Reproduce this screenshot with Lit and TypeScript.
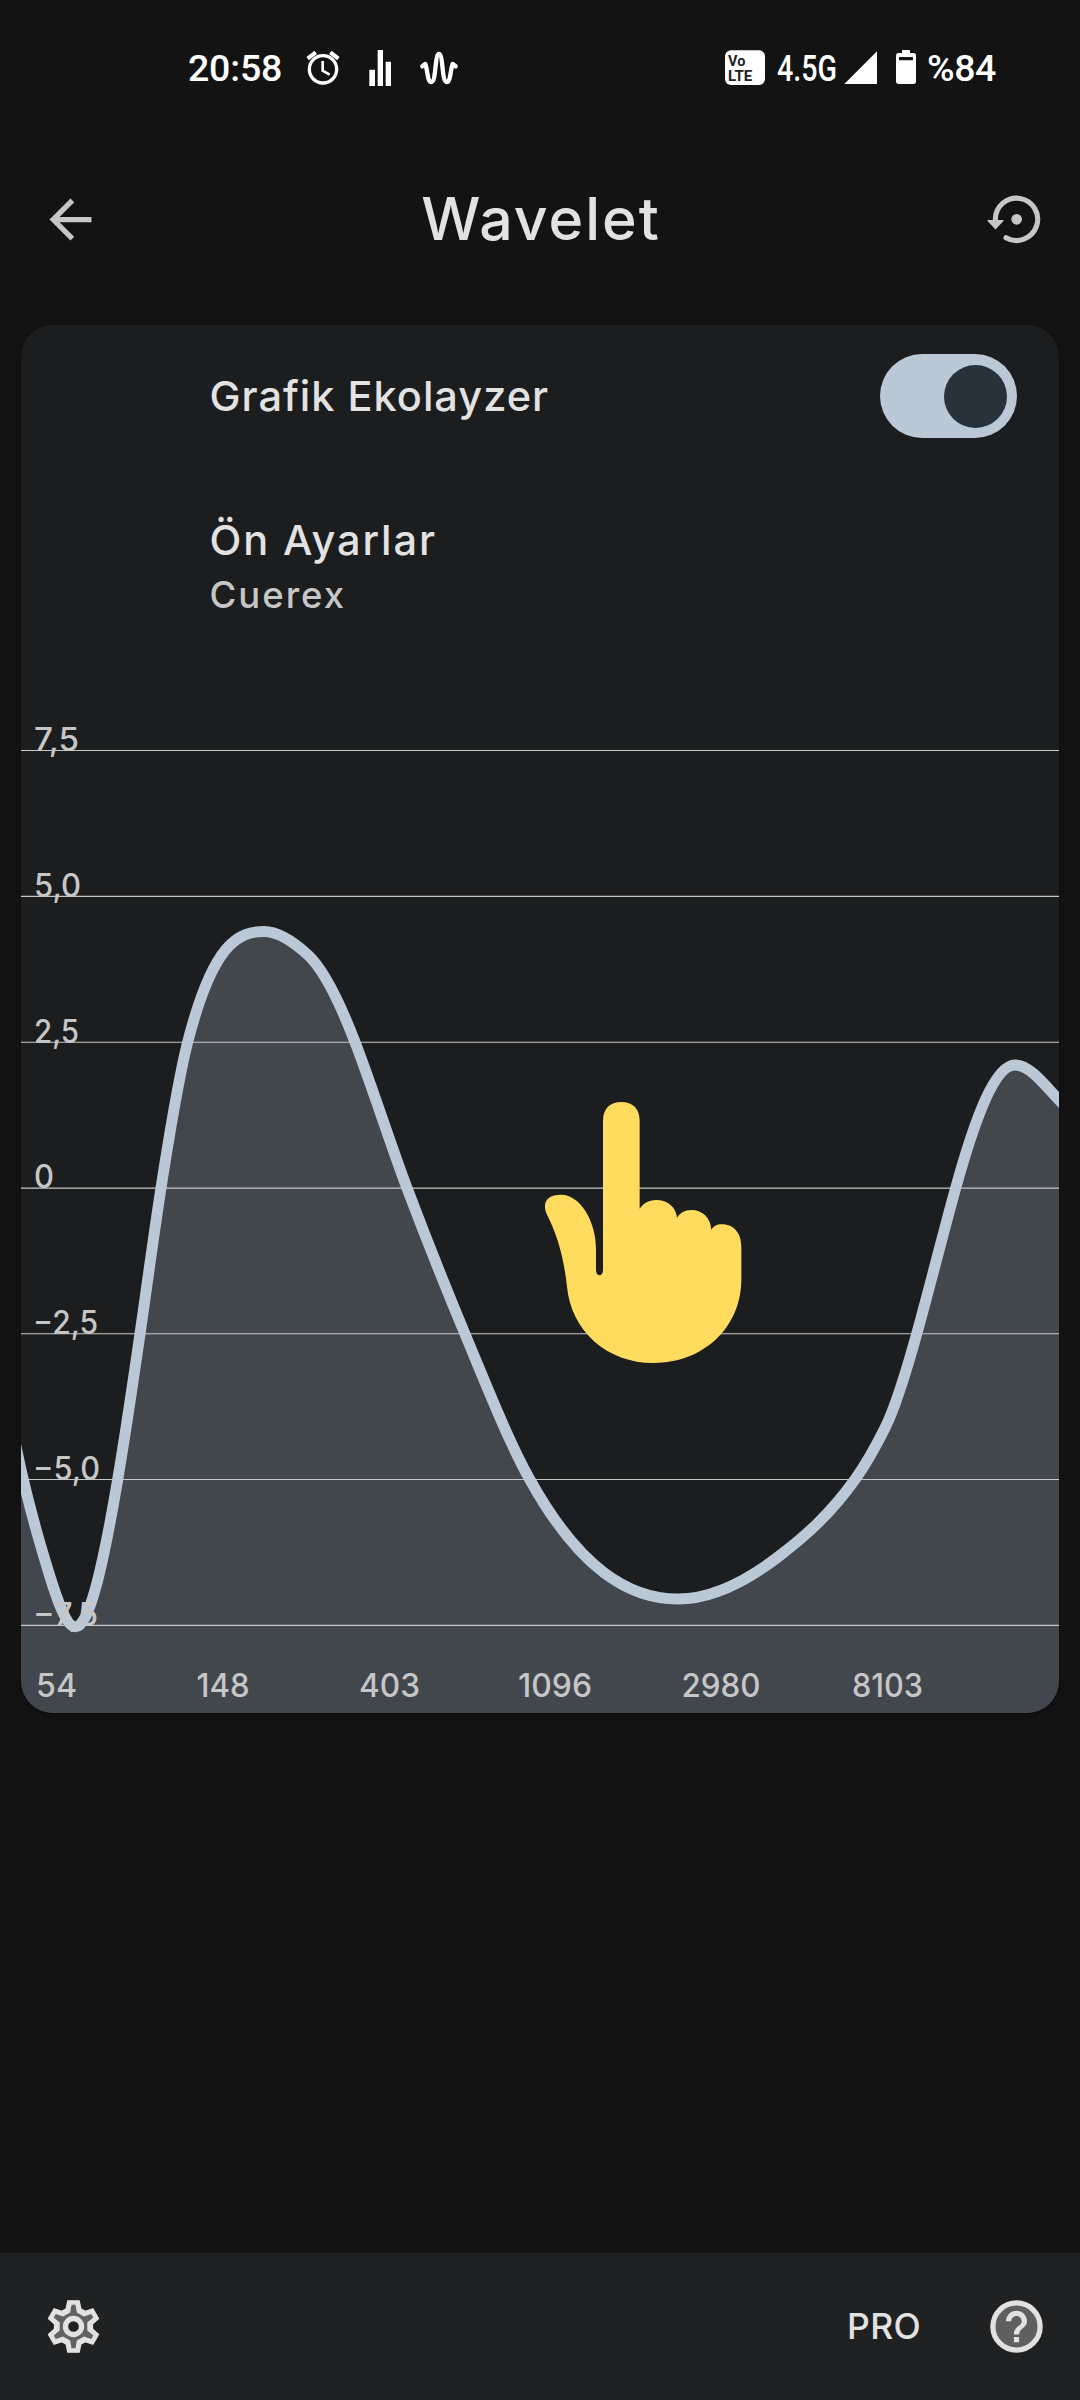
import { LitElement, html, css, svg } from "lit";
import { customElement, property } from "lit/decorators.js";

/** A knot of the response curve: x, y and the slope dy/dx there. */
type Knot = [number, number, number];

const KNOTS: Knot[] = [
  [11, 1424, 4.7],
  [21, 1470, 4.4],
  [41, 1546.7, 3.4],
  [75.6, 1626.8, 0],
  [117.7, 1479.5, -5.9],
  [140, 1334, -6.9],
  [161, 1188, -6.4],
  [187.7, 1042, -3.9],
  [264, 931.5, 0],
  [308, 955, 0.92],
  [355, 1042, 2.6],
  [407, 1188, 2.65],
  [465, 1334, 2.4],
  [529.8, 1479.5, 1.8],
  [678, 1599, 0],
  [778, 1557, -0.76],
  [855, 1479.5, -1.4],
  [885, 1428, -2],
  [916.7, 1334, -3.6],
  [955.7, 1188, -3.6],
  [1015, 1065, 0],
  [1059, 1100, 1.05],
  [1070, 1112, 1.05],
];

/** Joins the knots with cubic Hermite segments. */
function curvePath(k: Knot[]): string {
  let d = `M${k[0][0]} ${k[0][1]}`;
  for (let i = 1; i < k.length; i++) {
    const [x0, y0, m0] = k[i - 1];
    const [x1, y1, m1] = k[i];
    const h = (x1 - x0) / 3;
    d += `C${x0 + h} ${y0 + m0 * h} ${x1 - h} ${y1 - m1 * h} ${x1} ${y1}`;
  }
  return d;
}

const GAINS = [
  { label: "7,5", y: 750.8, x: 34, w: 45 },
  { label: "5,0", y: 896.7, x: 34, w: 47 },
  { label: "2,5", y: 1042.5, x: 34, w: 45 },
  { label: "0", y: 1188.4, x: 34, w: 20 },
  { label: "−2,5", y: 1334, x: 33, w: 65 },
  { label: "−5,0", y: 1479.8, x: 33, w: 67 },
  { label: "−7,5", y: 1625.7, x: 33, w: 65 },
];

const BANDS = [
  { label: "54", x: 56.5, w: 41 },
  { label: "148", x: 223, w: 53 },
  { label: "403", x: 389.5, w: 61 },
  { label: "1096", x: 555, w: 74 },
  { label: "2980", x: 721, w: 79 },
  { label: "8103", x: 887.5, w: 71 },
];

@customElement("eq-chart")
export class EqChart extends LitElement {
  static styles = css`
    :host { display: block; }
    svg { display: block; width: 100%; }
    .area { fill: #42474d; }
    .grid { stroke: #c6c8c8; stroke-width: 1.1; }
    .curve { fill: none; stroke: #bbc8d5; stroke-width: 11; }
    .label {
      fill: #c6c6c7;
      font: 500 32px Inter, "Liberation Sans", sans-serif;
    }
    .mid { text-anchor: middle; }
    .hand { fill: #ffdb5e; }
  `;

  render() {
    const d = curvePath(KNOTS);
    return html`<svg viewBox="21 690 1038 1023" height="1023">
      <path class="area" d="${d}V1713H11Z" />
      ${GAINS.map((g) => svg`<line class="grid" x1="21" x2="1059" y1=${g.y - 0.3} y2=${g.y - 0.3} />`)}
      <path class="curve" d=${d} />
      ${GAINS.map((g) => svg`<text class="label" x=${g.x} y=${g.y} textLength=${g.w} lengthAdjust="spacingAndGlyphs">${g.label}</text>`)}
      ${BANDS.map((b) => svg`<text class="label mid" x=${b.x} y="1696.8" textLength=${b.w} lengthAdjust="spacingAndGlyphs">${b.label}</text>`)}
      <g transform="translate(520 1070) scale(.33333)">
        <path class="hand" d="M249 152C249 116 270 96 304 96S359 116 359 152V416C369 402 386 390 408 390C444 390 468 412 471 443C480 429 494 420 514 420C549 420 572 444 574 480C580 469 590 463 606 463C642 463 664 490 664 530V628C664 775 548 879 401 879C262 879 154 784 141 650C131 560 112 495 80 432C66 397 81 374 124 374C181 374 228 455 228 535V600C228 621 249 621 249 600Z" />
      </g>
    </svg>`;
  }
}

@customElement("toggle-switch")
export class ToggleSwitch extends LitElement {
  @property({ type: Boolean }) on = false;

  static styles = css`
    :host { display: block; }
    .track {
      box-sizing: border-box;
      display: flex;
      align-items: center;
      width: 137px;
      height: 84px;
      padding: 0 10.5px;
      border-radius: 42px;
      background: #bbc8d5;
    }
    .thumb {
      width: 63px;
      height: 63px;
      border-radius: 50%;
      background: #28323a;
      margin-left: auto;
    }
  `;

  render() {
    return html`<div class="track"><div class="thumb"></div></div>`;
  }
}

@customElement("status-bar")
export class StatusBar extends LitElement {
  static styles = css`
    :host {
      box-sizing: border-box;
      display: flex;
      align-items: center;
      height: 134px;
      padding: 1px 84px 0 188px;
      color: #fff;
      font: 500 37.5px/44px Roboto, sans-serif;
    }
    .icons { display: block; overflow: visible; }
    .left { margin-left: 23.5px; }
    .right { margin-left: auto; }
    .time { letter-spacing: -0.2px; }
    .battery { margin-left: 9px; letter-spacing: -0.4px; }
    .ink { fill: none; stroke: #fff; }
    .cell { font: 500 108px Roboto, sans-serif; fill: #fff; }
    .volte { font: 700 46px Roboto, sans-serif; fill: #222; }
  `;

  render() {
    return html`
      <span class="time">20:58</span>
      <svg class="icons left" width="153" height="40" viewBox="435 54 459 120">
        <circle class="ink" cx="486" cy="118" r="41" stroke-width="10" />
        <path class="ink" stroke-width="8" d="M485 93V122L506 134" />
        <path class="ink" stroke-width="12" d="M440 86L464 67M508 67L532 86" />
        <path fill="#fff" d="M625 119H642V168H625ZM650 60H666V168H650ZM674 95H690V168H674Z" />
        <path class="ink" stroke-width="13" stroke-linecap="round" stroke-linejoin="round"
          d="M784 109L793 102C800 120 799 156 811 156C826 156 821 72 834 72S842 156 857 156C869 156 868 120 875 102L884 109" />
      </svg>
      <svg class="icons right" width="194" height="40" viewBox="72 54 582 120">
        <rect x="75" y="61" width="120" height="104" rx="18" fill="#fff" />
        <text class="volte" x="84" y="107" textLength="52" lengthAdjust="spacingAndGlyphs">Vo</text>
        <text class="volte" x="84" y="153" textLength="73" lengthAdjust="spacingAndGlyphs">LTE</text>
        <text class="cell" x="231" y="153" textLength="180" lengthAdjust="spacingAndGlyphs">4.5G</text>
        <path fill="#fff" d="M531 64V162H433Z" />
        <path fill="#fff" fill-rule="evenodd"
          d="M606 60H630V69H640Q648 69 648 77V154Q648 162 640 162H596Q588 162 588 154V77Q588 69 596 69H606ZM597 81V91H639V81Z" />
      </svg>
      <span class="battery">%84</span>
    `;
  }
}

const TOOTH_ANGLES = [0, 60, 120, 180, 240, 300];

/** Outline of a six-toothed gear centred on the origin. */
function gear(tip: number, tipY: number, base: number, baseY: number): string {
  const tooth = [[-base, -baseY], [-tip, -tipY], [tip, -tipY], [base, -baseY]];
  return TOOTH_ANGLES.flatMap((deg) => {
    const a = (deg * Math.PI) / 180;
    return tooth.map(([x, y]) =>
      `${(x * Math.cos(a) - y * Math.sin(a)).toFixed(2)},${(x * Math.sin(a) + y * Math.cos(a)).toFixed(2)}`);
  }).join(" ");
}

@customElement("app-root")
export class AppRoot extends LitElement {
  static styles = css`
    :host {
      display: flex;
      flex-direction: column;
      box-sizing: border-box;
      width: 1080px;
      height: 2400px;
      background: #131313;
      color: #e3e2e2;
      font-family: Inter, "Liberation Sans", sans-serif;
      font-weight: 500;
      overflow: hidden;
    }
    svg { display: block; }
    .bar {
      display: grid;
      grid-template-columns: 63px 1fr 63px;
      align-items: center;
      height: 170px;
      padding: 0 33px 0 39px;
    }
    .title {
      margin: 0;
      text-align: center;
      font-size: 59px;
      font-weight: 500;
      line-height: 70px;
      letter-spacing: 2px;
      padding-right: 4px;
    }
    .card {
      display: flex;
      flex-direction: column;
      height: 1388px;
      margin: 21px 21px 0;
      border-radius: 32px;
      background: #1c1d1e;
      overflow: hidden;
      box-shadow: 0 2px 4px rgba(0, 0, 0, 0.35);
    }
    .row {
      box-sizing: border-box;
      display: flex;
      align-items: center;
      justify-content: space-between;
      height: 142px;
      padding: 0 42px 0 188.5px;
    }
    .name { font-size: 41.5px; line-height: 56px; }
    .equalizer { letter-spacing: 1px; }
    .preset {
      box-sizing: border-box;
      height: 223px;
      padding: 44.500px 0 0 188.5px;
    }
    .presets { letter-spacing: 1.9px; }
    .value {
      color: #c6c6c6;
      font-size: 36.5px;
      line-height: 54px;
      letter-spacing: 2px;
    }
    .footer {
      box-sizing: border-box;
      display: flex;
      align-items: center;
      height: 147px;
      margin-top: auto;
      padding: 0 32px 0 42px;
      background: #202122;
    }
    .pro {
      margin: 0 64px 0 auto;
      font-size: 35.5px;
      line-height: 48px;
      font-weight: 500;
      letter-spacing: 0.3px;
    }
  `;

  render() {
    return html`
      <status-bar></status-bar>
      <header class="bar">
        <svg width="63" height="63" viewBox="0 0 24 24" fill="#c6c6c6">
          <path d="M20 11H7.83l5.59-5.59L12 4l-8 8 8 8 1.41-1.41L7.83 13H20z" />
        </svg>
        <h1 class="title">Wavelet</h1>
        <svg width="63" height="63" viewBox="72 81 189 189">
          <path d="M106 180V175A63.5 63.5 0 1 1 138 230" fill="none" stroke="#c6c6c6" stroke-width="15.5" stroke-linecap="round" />
          <path d="M84 179H129L106.500 203Z" fill="#c6c6c6" stroke="#c6c6c6" stroke-width="4" stroke-linejoin="round" />
          <circle cx="170" cy="175" r="16" fill="#c6c6c6" />
        </svg>
      </header>
      <section class="card">
        <div class="row">
          <span class="name equalizer">Grafik Ekolayzer</span>
          <toggle-switch on></toggle-switch>
        </div>
        <div class="preset">
          <div class="name presets">Ön Ayarlar</div>
          <div class="value">Cuerex</div>
        </div>
        <eq-chart></eq-chart>
      </section>
      <footer class="footer">
        <svg width="63" height="63" viewBox="-94.500 -94.500 189 189" stroke-linejoin="round">
          <polygon points=${gear(17, 77, 22, 53)} fill="#e3e2e2" stroke="#e3e2e2" stroke-width="4" />
          <polygon points=${gear(6, 65, 10, 42)} fill="#616263" />
          <circle r="24" fill="#202122" stroke="#e3e2e2" stroke-width="16" />
        </svg>
        <span class="pro">PRO</span>
        <svg width="63" height="63" viewBox="0 0 24 24" fill="#e3e2e2">
          <circle cx="12" cy="12" r="9" fill="#5f5f60" stroke="#e3e2e2" stroke-width="2" />
          <path d="M11 18h2v-2h-2zM12 6c-2.210 0-4 1.790-4 4h2c0-1.100.9-2 2-2s2 .9 2 2c0 2-3 1.750-3 5h2c0-2.250 3-2.500 3-5 0-2.210-1.790-4-4-4z" />
        </svg>
      </footer>
    `;
  }
}
